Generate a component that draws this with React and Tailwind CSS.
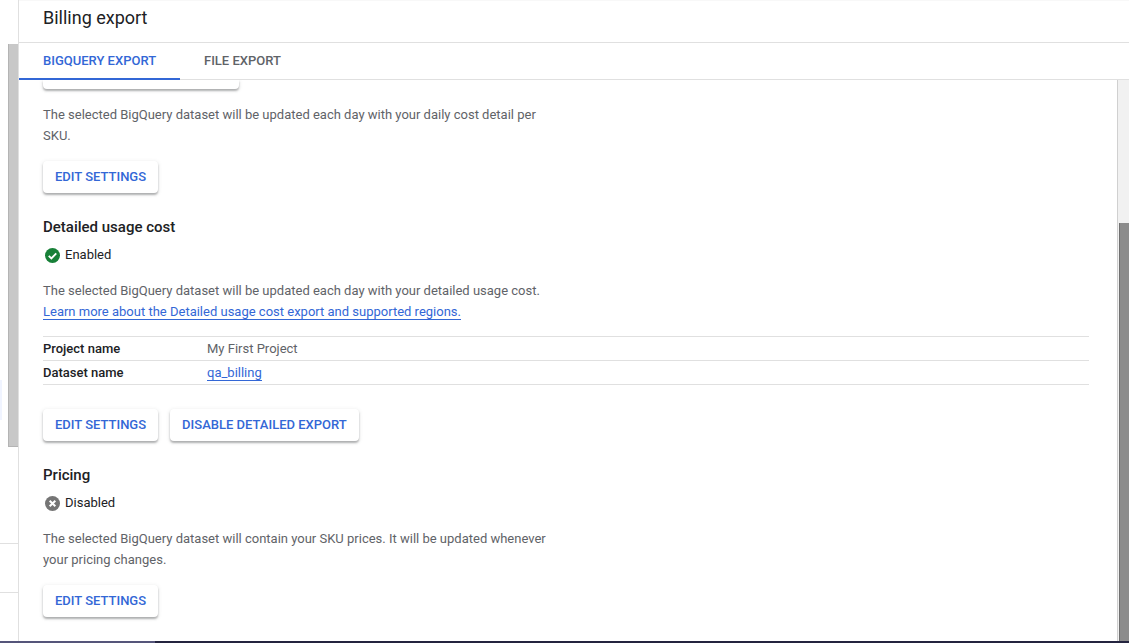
import React from 'react';

const font = { fontFamily: 'Roboto, sans-serif' };

const RaisedButton = ({ children }) => (
  <button className="h-8 rounded-[4px] bg-white px-3 text-[13px] font-medium text-[#3367d6] shadow-[0_2px_2px_rgba(60,64,67,0.35),0_1px_4px_rgba(60,64,67,0.15)]">
    {children}
  </button>
);

const Status = ({ enabled }) => (
  <div className="mt-2 flex h-5 items-center gap-[5px] pl-[2px] text-[13px] text-[#202124]">
    {enabled ? (
      <svg width="15" height="15" viewBox="0 0 24 24">
        <circle cx="12" cy="12" r="12" fill="#188038" />
        <path d="M6 12.5l4.2 4.2L18 8.6" fill="none" stroke="#fff" strokeWidth="3" />
      </svg>
    ) : (
      <svg width="15" height="15" viewBox="0 0 24 24">
        <circle cx="12" cy="12" r="12" fill="#757575" />
        <path d="M7.5 7.5l9 9M16.5 7.5l-9 9" fill="none" stroke="#fff" strokeWidth="3.2" />
      </svg>
    )}
    <span>{enabled ? 'Enabled' : 'Disabled'}</span>
  </div>
);

const Body = ({ children, className = '' }) => (
  <p className={`w-[510px] text-[13px] leading-[21px] text-[#5f6368] ${className}`}>{children}</p>
);

const App = () => (
  <div style={font} className="flex h-[643px] w-[1129px] flex-col overflow-hidden bg-white">
    <div className="flex min-h-0 flex-1">
      {/* left rail, the page behind the panel */}
      <div className="flex w-[19px] shrink-0 flex-col border-r border-[#e0e0e0]">
        <div className="mt-[44px] flex h-[403px] shrink-0 justify-between">
          <div className="mt-[336px] h-[40px] w-[2px] bg-[#f0f4ff]" />
          <div className="w-[10px] border-b border-l border-[#b4b4b4] bg-[#c8c8c8]" />
        </div>
        <div className="mt-[96px] h-[49px] border-t border-[#e0e0e0]" />
        <div className="border-t border-[#e0e0e0]" />
      </div>

      <div className="flex min-w-0 flex-1 flex-col">
        {/* header */}
        <div className="flex h-[43px] shrink-0 items-center border-t border-b border-t-[#f8f8f8] border-b-[#e0e0e0] pb-2 pl-6 text-[18px] text-[#202124]">
          Billing export
        </div>

        {/* tabs */}
        <div className="flex h-[37px] shrink-0 border-b border-[#e0e0e0] text-[13px] font-medium">
          <div className="flex h-[37px] w-[161px] items-center border-b-2 border-[#3367d6] pl-6 text-[#3367d6]">BIGQUERY EXPORT</div>
          <div className="flex h-[36px] items-center pl-6 text-[#5f6368]">FILE EXPORT</div>
        </div>

        <div className="flex min-h-0 flex-1">
          {/* content, scrolled so the first button is cut off */}
          <div className="min-w-0 flex-1 overflow-hidden border-r border-[#d0d0d0] pl-6 pr-[28px]">
            <div className="h-[9px] w-[196px] rounded-b-[4px] bg-white shadow-[0_2px_2px_rgba(60,64,67,0.35),0_1px_4px_rgba(60,64,67,0.15)]" />

            <Body className="mt-[15px]">The selected BigQuery dataset will be updated each day with your daily cost detail per SKU.</Body>
            <div className="mt-[15px]"><RaisedButton>EDIT SETTINGS</RaisedButton></div>

            <h3 className="mt-6 text-[15px] font-medium leading-5 text-[#202124]">Detailed usage cost</h3>
            <Status enabled />
            <Body className="mt-[15px]">
              The selected BigQuery dataset will be updated each day with your detailed usage cost.{' '}
              <a className="border-b border-[#3367d6] text-[#3367d6]">Learn more about the Detailed usage cost export and supported regions.</a>
            </Body>

            <div className="mt-[14px] border-t border-[#e0e0e0] text-[13px]">
              <div className="flex h-6 items-center border-b border-[#e0e0e0]">
                <div className="w-[164px] font-medium text-[#202124]">Project name</div>
                <div className="text-[#5f6368]">My First Project</div>
              </div>
              <div className="flex h-6 items-center border-b border-[#e0e0e0]">
                <div className="w-[164px] font-medium text-[#202124]">Dataset name</div>
                <a className="border-b border-[#3367d6] leading-[15px] text-[#3367d6]">qa_billing</a>
              </div>
            </div>

            <div className="mt-6 flex gap-3">
              <RaisedButton>EDIT SETTINGS</RaisedButton>
              <RaisedButton>DISABLE DETAILED EXPORT</RaisedButton>
            </div>

            <h3 className="mt-6 text-[15px] font-medium leading-5 text-[#202124]">Pricing</h3>
            <Status />
            <Body className="mt-[15px]">The selected BigQuery dataset will contain your SKU prices. It will be updated whenever your pricing changes.</Body>
            <div className="mt-[15px]"><RaisedButton>EDIT SETTINGS</RaisedButton></div>
          </div>

          {/* scrollbar */}
          <div className="flex w-[11px] shrink-0 flex-col bg-[#f1f1f1] pl-[1px]">
            <div className="mt-[143px] flex-1 border-l border-[#707070] bg-[#8c8c8c]" />
          </div>
        </div>
      </div>
    </div>

    {/* edge of the taskbar below the window */}
    <div className="flex h-[2px] shrink-0">
      <div className="w-[155px] bg-[#55557a]" />
      <div className="flex-1 bg-[#24243f]" />
    </div>
  </div>
);

export default App;
